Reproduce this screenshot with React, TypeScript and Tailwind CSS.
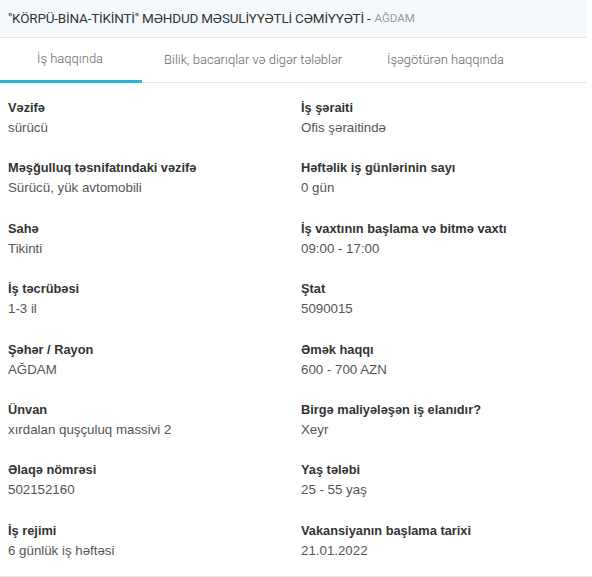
const ROWS: [string, string, string, string][] = [
  ['Vəzifə', 'sürücü', 'İş şəraiti', 'Ofis şəraitində'],
  ['Məşğulluq təsnifatındaki vəzifə', 'Sürücü, yük avtomobili', 'Həftəlik iş günlərinin sayı', '0 gün'],
  ['Sahə', 'Tikinti', 'İş vaxtının başlama və bitmə vaxtı', '09:00 - 17:00'],
  ['İş təcrübəsi', '1-3 il', 'Ştat', '5090015'],
  ['Şəhər / Rayon', 'AĞDAM', 'Əmək haqqı', '600 - 700 AZN'],
  ['Ünvan', 'xırdalan quşçuluq massivi 2', 'Birgə maliyələşən iş elanıdır?', 'Xeyr'],
  ['Əlaqə nömrəsi', '502152160', 'Yaş tələbi', '25 - 55 yaş'],
  ['İş rejimi', '6 günlük iş həftəsi', 'Vakansiyanın başlama tarixi', '21.01.2022'],
];

function Field({ label, value }: { label: string; value: string }) {
  return (
    <div>
      <div className="text-[12.8px] leading-[20px] font-bold text-[#333]">{label}</div>
      <div className="text-[13.3px] leading-[20px] text-[#555]">{value}</div>
    </div>
  );
}

export default function App() {
  return (
    <div className="w-[592px] h-[577px] bg-white" style={{ fontFamily: '"Liberation Sans", Arial, sans-serif' }}>
      <div className="w-[586px]">
        <div
          className="h-[38px] bg-[#f5f9fc] border-b border-[#e3e8ec] flex items-center pl-2 text-[13.5px] text-[#333]"
          style={{ fontFamily: 'Roboto, "Open Sans", sans-serif' }}
        >
          <span className="tracking-[-0.2px]">"KÖRPÜ-BİNA-TİKİNTİ" MƏHDUD MƏSULİYYƏTLİ CƏMİYYƏTİ - </span>
          <span className="ml-1 text-[11.5px] text-[#999]">AĞDAM</span>
        </div>
        <div
          className="h-[45px] flex border-b border-[#e5e5e5] text-[13px] font-light text-[#666]"
          style={{ fontFamily: 'Roboto, sans-serif' }}
        >
          <div className="w-[142px] border-b-[3px] border-[#2bb5d8] flex items-center pl-[37px] -mb-px">İş haqqında</div>
          <div className="flex items-center pl-[22px] w-[245px]">Bilik, bacarıqlar və digər tələblər</div>
          <div className="flex items-center">İşəgötürən haqqında</div>
        </div>
      </div>
      <div className="border-b border-[#e6e6e6] pt-[15px] pb-[15px]">
        <div className="grid grid-cols-[293px_1fr] gap-y-[20.4px] pl-2">
          {ROWS.map(([l1, v1, l2, v2]) => (
            <>
              <Field key={l1} label={l1} value={v1} />
              <Field key={l2} label={l2} value={v2} />
            </>
          ))}
        </div>
      </div>
    </div>
  );
}
